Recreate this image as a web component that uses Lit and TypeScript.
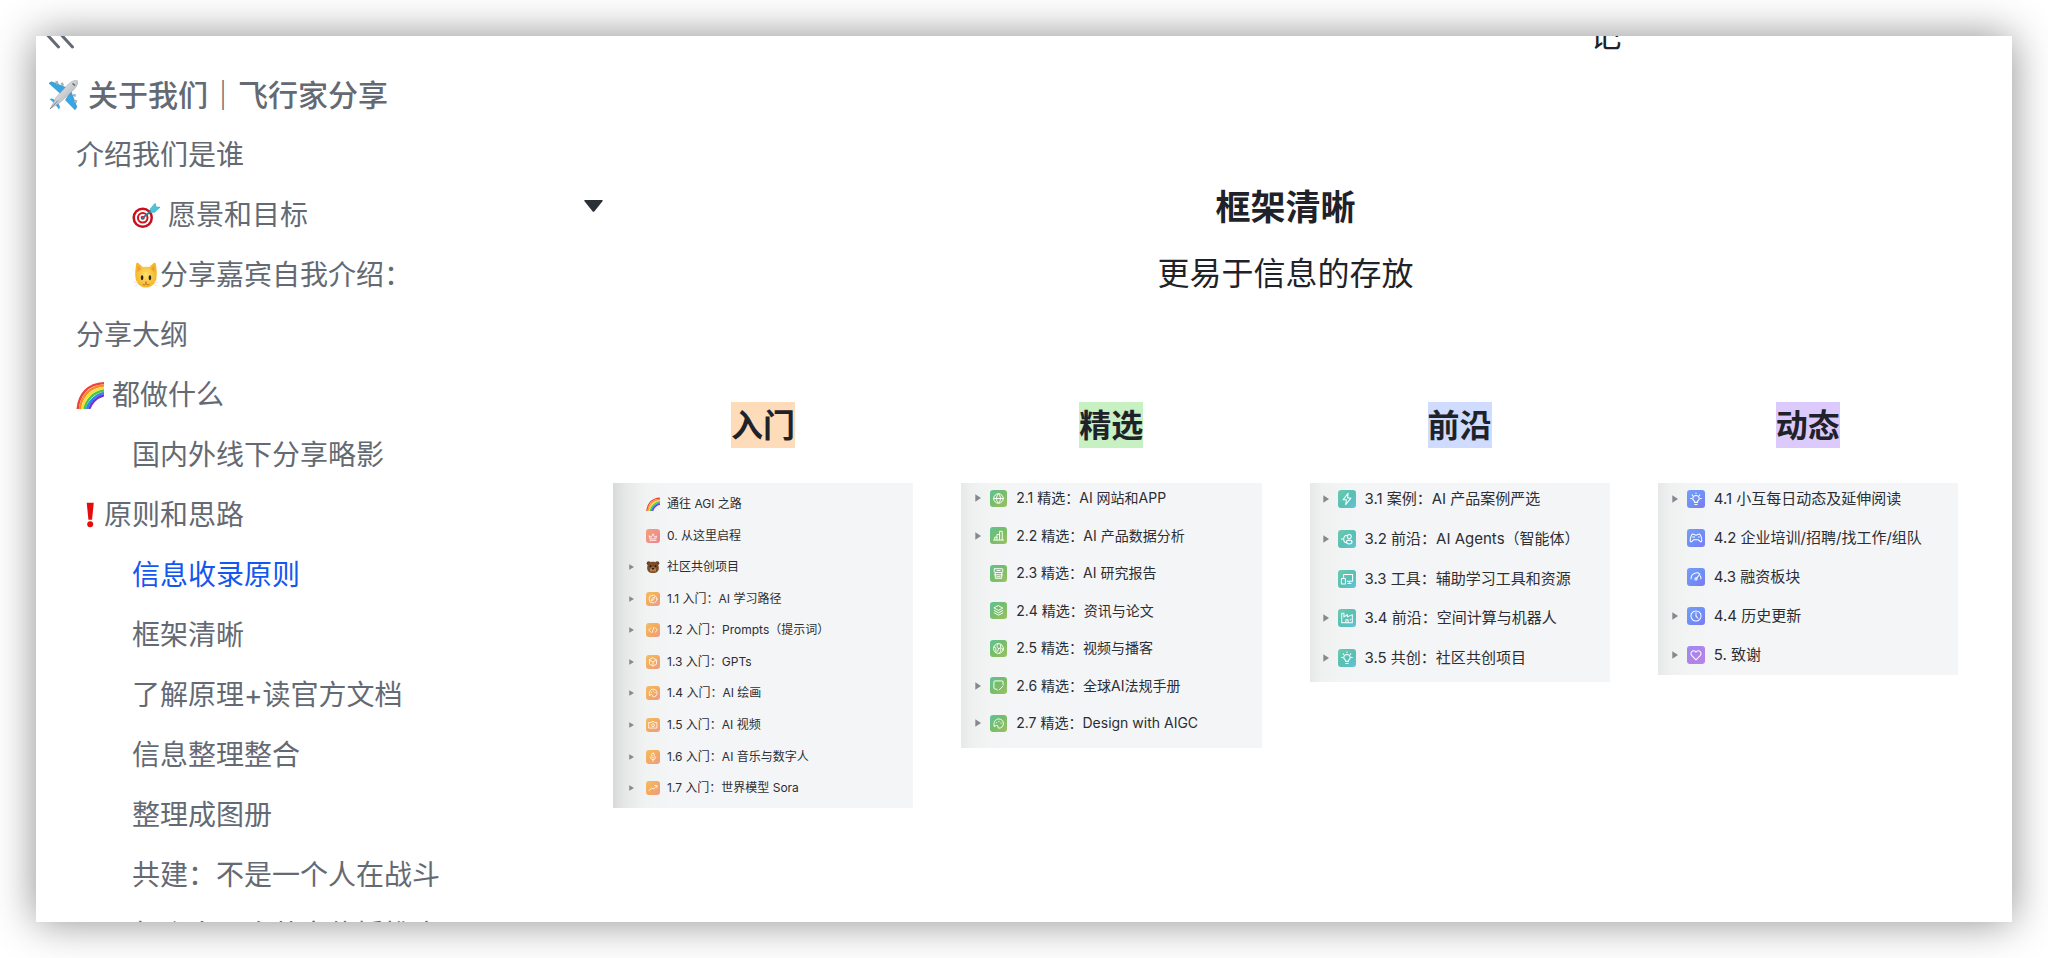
import { LitElement, html, svg, css, nothing } from "lit";
import { customElement, property } from "lit/decorators.js";
import { classMap } from "lit/directives/class-map.js";

const emojis: Record<string, unknown> = {
  plane: svg`
    <defs><linearGradient id="body" x1="0" y1="0" x2="1" y2="1"><stop offset="0" stop-color="#fafbfc"/><stop offset="1" stop-color="#9a9ea6"/></linearGradient></defs>
    <path d="M1 3.2L3.6 1.8 19 8 13 14Z" fill="#35a7e4" stroke="#2386bd" stroke-width=".6"/>
    <path d="M28.8 27L27 29.8 17.5 20 23 11.500Z" fill="#35a7e4" stroke="#2386bd" stroke-width=".6"/>
    <path d="M1.500 19L4 18.500 9 21 6 23Z" fill="#35a7e4"/><path d="M11 29.500L12 27 9.500 21 7 24Z" fill="#35a7e4"/>
    <path d="M7 1.500l2.500-.8 1.200 3-2.300 1zM12.500 3l2.500-.6 1 3-2.200.8zM29.400 20.500l-.8 2.600-3-1.200 1-2.400zM28 14.500l-.5 2.500-2.800-1 .8-2.300z" fill="#a9adb5"/>
    <path d="M29.500.8C27-.4 23 1.600 20.500 4L8 17.500 2.500 28.500 12 22.500 26 9.500C28.500 7 30.600 3 29.500.8Z" fill="url(#body)" stroke="#9a9ea6" stroke-width=".5"/>
    <path d="M24.500 3.500l2.500 2" stroke="#545a66" stroke-width="1.300"/><path d="M2 29L10 20.500" stroke="#777c86" stroke-width=".9"/>`,
  target: svg`
    <circle cx="11.500" cy="18" r="11" fill="#c90f1c"/><circle cx="11.500" cy="18" r="8.300" fill="#fff"/><circle cx="11.500" cy="18" r="6.200" fill="#d31421"/><circle cx="11.500" cy="18" r="4" fill="#fff"/><circle cx="11.500" cy="18" r="2.200" fill="#d31421"/>
    <path d="M10.500 19L22.500 9" stroke="#247f93" stroke-width="2"/>
    <path d="M19.500 8.500L24.800 2.500 25.700 6.300 30 6.800 23.800 12.200 20 12Z" fill="#4cc5d4" stroke="#2c9cae" stroke-width=".6"/>`,
  cat: svg`
    <defs><radialGradient id="fur"><stop offset="0" stop-color="#ffe36a"/><stop offset="1" stop-color="#f6b52a"/></radialGradient></defs>
    <path d="M4.500 3C3.500 9 3 15 4 19.500 5.500 25 10 28.500 15 28.500S24.500 25 26 19.500C27 15 26.500 9 25.500 3 25.300 1.800 24 1.600 23 2.400L18.500 6.500A15 15 0 0 0 11.500 6.500L7 2.400C6 1.600 4.700 1.800 4.500 3Z" fill="url(#fur)"/>
    <path d="M6 5l4 3.200L6 12ZM24 5l-4 3.200L24 12Z" fill="#ee9f2c"/>
    <ellipse cx="10.800" cy="18" rx="1.400" ry="2.600" fill="#2f2722"/><ellipse cx="19.200" cy="18" rx="1.400" ry="2.600" fill="#2f2722"/>
    <path d="M13.500 22.300h3L15 24Z" fill="#e0554f"/><path d="M11.500 25c1.500 1.200 3 .5 3.500-1 .5 1.500 2 2.200 3.500 1" fill="none" stroke="#8d6420" stroke-width=".9"/>
    <path d="M1.500 23l5-.8M2.500 27l4.500-2M28.500 23l-5-.8M27.500 27L23 25" stroke="#e9e2cf" stroke-width=".8"/>`,
  rainbow: svg`
    <g fill="none" stroke-width="2.600">
      <path d="M1.800 30C3 15 12 3 30 2.300" stroke="#f0413c"/><path d="M4.300 30C5.500 17 14 6 30 4.900" stroke="#f98b25"/>
      <path d="M6.800 30C8 19 16 9 30 7.500" stroke="#fbdc3a"/><path d="M9.300 30C10.500 21 18 12 30 10.100" stroke="#46c93f"/>
      <path d="M11.800 30C13 23 20 15 30 12.700" stroke="#2d86f0"/><path d="M14.200 30C15.500 25 21 17.500 30 15.200" stroke="#7132d3"/>
    </g>`,
  bang: svg`<path d="M11.500 2h7.500l-1.800 18h-3.900z" fill="#e60c0c"/><circle cx="15.200" cy="25" r="3.200" fill="#e60c0c"/>`,
  bear: svg`
    <circle cx="6" cy="7" r="4.500" fill="#6b4020"/><circle cx="24" cy="7" r="4.500" fill="#6b4020"/>
    <path d="M15 3.500C23 3.500 27 9 27.500 16S24 28 15 28 2 23 2.500 16 7 3.500 15 3.500Z" fill="#7c4c28"/>
    <ellipse cx="15" cy="21" rx="6.500" ry="5.500" fill="#b98755"/><ellipse cx="15" cy="18.500" rx="3" ry="2" fill="#2b1a10"/>
    <circle cx="9.500" cy="13" r="1.800" fill="#20130b"/><circle cx="20.500" cy="13" r="1.800" fill="#20130b"/><path d="M11.500 24c2 1.500 5 1.500 7 0" stroke="#3b2415" stroke-width="1.300" fill="none"/>`,
};

const glyphs: Record<string, unknown> = {
  start: svg`<path d="M4 8l2 1.500L8 5.500l2 4L12 8l-.8 3.300H4.800zM4.500 13h7"/>`,
  compass: svg`<circle cx="8" cy="8" r="4.500"/><path d="M10 6L8.800 8.800 6 10l1.200-2.800z"/>`,
  code: svg`<path d="M5.500 5.500L3 8l2.500 2.500M10.500 5.500L13 8l-2.500 2.500M9 5L7 11"/>`,
  cube: svg`<path d="M8 3.300L12 5.600V10.400L8 12.700 4 10.400V5.600ZM4.200 5.800L8 8l3.800-2.200M8 8v4.500"/>`,
  palette: svg`<path d="M4 10.500C2.800 7 5 3.700 8.300 3.700 11 3.700 12.800 5.800 12.600 8.200 12.500 10.700 10.800 12.400 8.500 12.400 7 12.400 7.800 10.600 7 9.900 6.200 9.200 5 10.800 4 10.500Z"/><path d="M6 7.300h.4M8.200 6h.4M10.200 7.500h.4"/>`,
  camera: svg`<path d="M3.500 5.200H6L6.700 4.200H9.300L10 5.200H12.500V11.500H3.500Z"/><circle cx="8" cy="8.300" r="1.700"/>`,
  mic: svg`<rect x="6.600" y="3.500" width="2.800" height="5.500" rx="1.400"/><path d="M4.800 8c0 4.200 6.400 4.200 6.400 0M8 11.200v2"/>`,
  trend: svg`<path d="M3.500 11L6.500 7.800 8.800 9.300 12.300 5.500M9.800 5.200H12.500V7.800"/>`,
  globe: svg`<circle cx="8" cy="8" r="4.500"/><path d="M3.500 8h9M8 3.500C5.500 6 5.500 10 8 12.500 10.500 10 10.500 6 8 3.500"/>`,
  chart: svg`<path d="M3.300 12.300h9.400M4.500 12V9.500H6.500V12M6.500 10V7H9V12M9 8V4H11.500V12"/>`,
  report: svg`<rect x="4" y="3.500" width="8" height="3.500" rx=".5"/><path d="M5 7.200V12.500H11V7.200M4 9.200h8M6.500 5.200h3M6.500 11h3"/>`,
  layers: svg`<path d="M8 3.500L12 5.700 8 7.900 4 5.700ZM4 8l4 2.200L12 8M4 10.200l4 2.200 4-2.200"/>`,
  reel: svg`<circle cx="8" cy="8" r="4.600"/><path d="M8 3.500C6 5 6.200 7 8 8 10 7 12 8 12.500 9.500M8 8C8 10 6.500 12 5 11.500M3.700 6.500C5.500 6.500 6 8 5.500 10M10 4.500V7M8.500 12.300C10 11.500 10.500 10.500 10 9"/>`,
  note: svg`<path d="M12.300 7V4.500C12.300 4 12 3.700 11.500 3.700H4.500C4 3.700 3.700 4 3.700 4.500V10.500C3.700 11 4 11.300 4.500 11.300H6L7 12.500M12.300 8.500L8.800 12"/>`,
  bolt: svg`<path d="M9 3L4.500 8.700H7.500L6.800 13 11.500 7.200H8.500Z"/>`,
  agents: svg`<circle cx="10" cy="5.700" r="1.800"/><ellipse cx="10" cy="10.700" rx="2.500" ry="1.700"/><path d="M7.800 4.600C4.500 4.600 4.200 10.800 7.200 11.300M3 8h2"/>`,
  devices: svg`<path d="M5 6.500V4H13V10H8.200M10 10v2M8.800 12h2.800"/><rect x="3" y="7.500" width="3.600" height="5" rx=".4"/>`,
  factory: svg`<path d="M3.300 12.300V3.700H5.300V7L8.300 5V7L12.700 5V12.300ZM7 12V9.500H9V12M11 9.200v.6"/>`,
  bulb: svg`<path d="M6.700 11V10C4 8.500 5 4.800 8 4.800S12 8.500 9.300 10V11ZM7 12.800h2M8 2.500v.6M3.300 7.500h.7M12 7.500h.7M4.600 4.300l.5.500M11.400 4.300l-.5.500"/>`,
  game: svg`<path d="M5 4.500C7 4.500 6.500 5.500 8 5.500S9 4.500 11 4.500C12.500 5 13.500 9.500 13 11 12 12.300 11 10 10 9.500H6C5 10 4 12.300 3 11 2.500 9.500 3.500 5 5 4.500ZM5 7.200h1.800M10.200 7.200h.8"/>`,
  gauge: svg`<path d="M3.600 9.500C3.600 3.800 10 3.500 11 5.300M12.400 9.500C12.400 8.500 12.200 7.800 11.900 7.200M8.500 9L11.500 5.500"/><circle cx="8" cy="9.700" r="1"/>`,
  clock: svg`<circle cx="8" cy="8" r="4.500"/><path d="M8 5.200V8.200L9.800 10"/>`,
  heart: svg`<path d="M8 12.300L4.300 8.600C1.800 5.500 6 2.600 8 5.500 10 2.600 14.200 5.500 11.700 8.600Z"/>`,
};

type Tone = "coral" | "orange" | "green" | "teal" | "blue" | "purple";
interface Entry { text: string; icon: string; open?: boolean; tone?: Tone; emoji?: boolean }
interface Column { key: string; title: string; tone: Tone; entries: Entry[] }

const columns: Column[] = [
  { key: "intro", title: "入门", tone: "orange", entries: [
    { text: "通往 AGI 之路", icon: "rainbow", emoji: true },
    { text: "0. 从这里启程", icon: "start", tone: "coral" },
    { text: "社区共创项目", icon: "bear", emoji: true, open: true },
    { text: "1.1 入门：AI 学习路径", icon: "compass", open: true },
    { text: "1.2 入门：Prompts（提示词）", icon: "code", open: true },
    { text: "1.3 入门：GPTs", icon: "cube", open: true },
    { text: "1.4 入门：AI 绘画", icon: "palette", open: true },
    { text: "1.5 入门：AI 视频", icon: "camera", open: true },
    { text: "1.6 入门：AI 音乐与数字人", icon: "mic", open: true },
    { text: "1.7 入门：世界模型 Sora", icon: "trend", open: true },
  ] },
  { key: "picks", title: "精选", tone: "green", entries: [
    { text: "2.1 精选：AI 网站和APP", icon: "globe", open: true },
    { text: "2.2 精选：AI 产品数据分析", icon: "chart", open: true },
    { text: "2.3 精选：AI 研究报告", icon: "report" },
    { text: "2.4 精选：资讯与论文", icon: "layers" },
    { text: "2.5 精选：视频与播客", icon: "reel" },
    { text: "2.6 精选：全球AI法规手册", icon: "note", open: true },
    { text: "2.7 精选：Design with AIGC", icon: "palette", open: true },
  ] },
  { key: "frontier", title: "前沿", tone: "teal", entries: [
    { text: "3.1 案例：AI 产品案例严选", icon: "bolt", open: true },
    { text: "3.2 前沿：AI Agents（智能体）", icon: "agents", open: true },
    { text: "3.3 工具：辅助学习工具和资源", icon: "devices" },
    { text: "3.4 前沿：空间计算与机器人", icon: "factory", open: true },
    { text: "3.5 共创：社区共创项目", icon: "bulb", open: true },
  ] },
  { key: "news", title: "动态", tone: "blue", entries: [
    { text: "4.1 小互每日动态及延伸阅读", icon: "bulb", open: true },
    { text: "4.2 企业培训/招聘/找工作/组队", icon: "game" },
    { text: "4.3 融资板块", icon: "gauge" },
    { text: "4.4 历史更新", icon: "clock", open: true },
    { text: "5. 致谢", icon: "heart", open: true, tone: "purple" },
  ] },
];

interface Heading { text: string; level: 0 | 1 | 2; emoji?: string; tight?: boolean; active?: boolean }
const outline: Heading[] = [
  { text: "关于我们｜飞行家分享", level: 0, emoji: "plane" },
  { text: "介绍我们是谁", level: 1 },
  { text: "愿景和目标", level: 2, emoji: "target" },
  { text: "分享嘉宾自我介绍：", level: 2, emoji: "cat", tight: true },
  { text: "分享大纲", level: 1 },
  { text: "都做什么", level: 1, emoji: "rainbow" },
  { text: "国内外线下分享略影", level: 2 },
  { text: "原则和思路", level: 1, emoji: "bang", tight: true },
  { text: "信息收录原则", level: 2, active: true },
  { text: "框架清晰", level: 2 },
  { text: "了解原理+读官方文档", level: 2 },
  { text: "信息整理整合", level: 2 },
  { text: "整理成图册", level: 2 },
  { text: "共建：不是一个人在战斗", level: 2 },
  { text: "每个人：会共享传播推广", level: 2 },
];

@customElement("doc-outline")
class DocOutline extends LitElement {
  static styles = css`
    :host { display: block; overflow: hidden; color: #646a73; }
    .collapse { display: block; width: 32px; height: 32px; margin: -16px 0 13px 8px; padding: 0; border: 0; background: none; color: inherit; }
    .collapse svg { display: block; fill: none; stroke: currentColor; stroke-width: 3; stroke-linecap: round; }
    ul { list-style: none; margin: 0; padding: 0; }
    a { display: flex; align-items: center; gap: 8px; height: 60px; font-size: 28px; line-height: 60px; color: inherit; text-decoration: none; white-space: nowrap; }
    .tight { gap: 0; }
    .level0 { padding-left: 12px; gap: 10px; font-size: 30px; font-weight: 500; }
    .level1 { padding-left: 40px; }
    .level2 { padding-left: 96px; }
    .active { color: #1456f0; }
    .emoji { width: 1em; height: 1em; flex: none; }
  `;
  render() {
    return html`
      <button class="collapse" aria-label="收起目录">
        <svg width="32" height="32" viewBox="0 0 32 32"><path d="M14.500 27L2.500 14 14.500 1M28.500 27L16.500 14 28.500 1"/></svg>
      </button>
      <nav aria-label="目录"><ul>
        ${outline.map((h) => html`<li><a href="#" class=${classMap({ [`level${h.level}`]: true, tight: !!h.tight, active: !!h.active })}>
          ${h.emoji ? html`<svg class="emoji" viewBox="0 0 30 30" aria-hidden="true">${emojis[h.emoji]}</svg>` : nothing}<span>${h.text}</span>
        </a></li>`)}
      </ul></nav>`;
  }
}

@customElement("topic-card")
class TopicCard extends LitElement {
  @property({ attribute: false }) column!: Column;
  static styles = css`
    :host { display: block; min-width: 0; text-align: center; }
    h3 { margin: 0 0 35px; font-size: 32px; line-height: 44px; font-weight: 600; }
    mark { display: block; width: fit-content; margin: 0 auto; padding-top: 2px; color: #1f2329; }
    .intro mark { background: #fedcb9; }
    .picks mark { background: #c7f0c3; }
    .frontier mark { background: #d0dcff; }
    .news mark { background: #dccafc; }
    ul { box-sizing: border-box; display: flex; flex-direction: column; justify-content: space-between; list-style: none; margin: 0; text-align: left; color: #2b2e33; overflow: hidden;
      background: linear-gradient(90deg, #e7e9e9, #eff0f0 12px, #f3f4f4 32px, #f4f5f7 56px); }
    .intro ul { aspect-ratio: 300 / 325; padding: 10px 0 9px 16px; font-size: 12px; background: linear-gradient(90deg, #d8dada, #e6e8e8 12px, #f1f2f2 32px, #f4f5f6 56px); }
    .picks ul { aspect-ratio: 300 / 265; padding: 4px 0 14px 14px; font-size: 14px; }
    .frontier ul { aspect-ratio: 300 / 199; padding: 5px 0 13px 13px; font-size: 15px; }
    .news ul { aspect-ratio: 300 / 192; padding: 5px 0 9px 14px; font-size: 15px; }
    li { display: grid; grid-template-columns: 6px 18px 1fr; column-gap: 9px; align-items: center; height: 22px; line-height: 22px; white-space: nowrap; }
    .intro li { grid-template-columns: 5px 14px 1fr; column-gap: 12px; }
    .intro .label { margin-left: -5px; }
    .picks li { grid-template-columns: 6px 17px 1fr; }
    .arrow { width: 100%; height: 8px; fill: #85898f; }
    .intro .arrow { height: 6px; }
    .icon { display: block; width: 100%; border-radius: 3px; fill: none; stroke: #fff; stroke-width: 0.9; stroke-linecap: round; stroke-linejoin: round; }
    .emoji { display: block; width: 100%; }
    .coral { background: linear-gradient(135deg, #f3a07c, #ee858e); }
    .orange { background: linear-gradient(135deg, #f4bd62, #f3a95f 55%, #ee9a8f); }
    .green { background: linear-gradient(135deg, #5fc39a, #75bd6a 45%, #9cc162); }
    .teal { background: linear-gradient(135deg, #6bcab0, #58bfb5 55%, #66c3d8); }
    .blue { background: linear-gradient(135deg, #739df8, #6f8ff6 55%, #8078f0); }
    .purple { background: linear-gradient(135deg, #9a8cf2, #b083ea 55%, #b984e6); }
  `;
  render() {
    const { key, title, tone, entries } = this.column;
    return html`<section class=${key}>
      <h3><mark>${title}</mark></h3>
      <ul>${entries.map((e) => html`<li>
        ${e.open ? html`<svg class="arrow" viewBox="0 0 6 8" preserveAspectRatio="none"><path d="M.3.300L6 4 .3 7.700Z"/></svg>` : html`<span></span>`}
        ${e.emoji
          ? html`<svg class="emoji" viewBox="0 0 30 30">${emojis[e.icon]}</svg>`
          : html`<svg class="icon ${e.tone ?? tone}" viewBox="0 0 16 16">${glyphs[e.icon]}</svg>`}
        <span class="label">${e.text}</span>
      </li>`)}</ul>
    </section>`;
  }
}

@customElement("app-root")
class AppRoot extends LitElement {
  static styles = css`
    :host { display: block; box-sizing: border-box; height: 100vh; padding: 36px; overflow: hidden; background: #fff; color: #1f2329; font-family: Inter, "Noto Sans CJK SC", sans-serif; }
    .window { display: grid; grid-template-columns: 548px 1fr; height: 100%; background: #fff; box-shadow: 0 0 40px rgba(0, 0, 0, 0.45); }
    .page { display: grid; grid-template-columns: 29px 1fr; align-content: start; min-width: 0; overflow: hidden; padding-right: 54px; text-align: center; }
    .tail { grid-column: 2; margin: -24px 0 117px; padding-left: 640px; font-size: 32px; line-height: 48px; }
    .fold { align-self: start; width: 20px; height: 60px; padding: 0; border: 0; background: none; }
    .fold svg { display: block; margin-top: -2px; fill: #2b2f36; }
    h2 { margin: 0 0 13px; font-size: 35px; line-height: 60px; font-weight: 600; }
    .lead { grid-column: 2; margin: 0 0 104px; font-size: 32px; line-height: 48px; }
    .topics { grid-column: 2; display: grid; grid-template-columns: repeat(4, minmax(0, 1fr)); gap: 48px; align-items: start; }
  `;
  render() {
    return html`<div class="window">
      <doc-outline></doc-outline>
      <main class="page">
        <p class="tail">记</p>
        <button class="fold" aria-label="折叠"><svg width="20" height="14" viewBox="0 0 20 14"><path d="M1 1h17c.8 0 1 .8.500 1.300l-8 9.900c-.6.7-1.400.7-2 0L.500 2.300C0 1.800.2 1 1 1Z"/></svg></button>
        <h2>框架清晰</h2>
        <p class="lead">更易于信息的存放</p>
        <div class="topics">${columns.map((c) => html`<topic-card .column=${c}></topic-card>`)}</div>
      </main>
    </div>`;
  }
}
